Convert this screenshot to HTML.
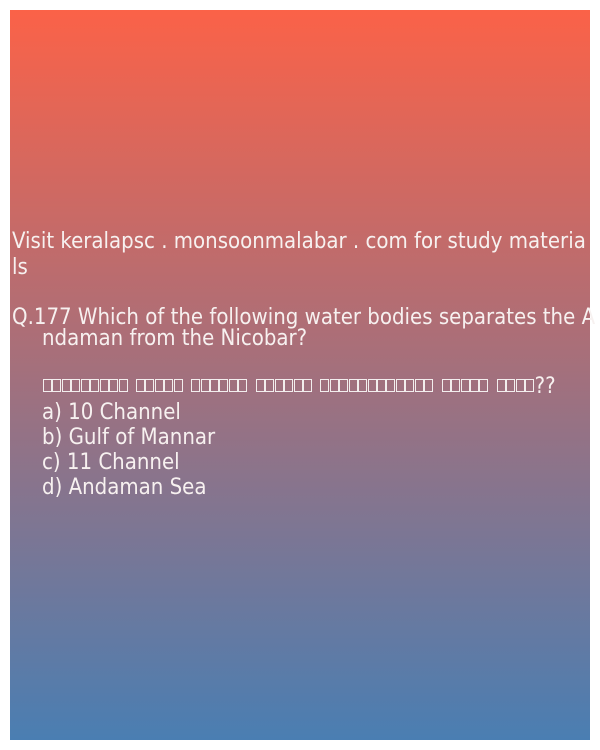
<!DOCTYPE html>
<html><head><meta charset="utf-8"><style>
html,body{margin:0;padding:0;background:#fff;width:600px;height:750px;overflow:hidden}
.box{position:absolute;left:10px;top:10px;width:580px;height:730px;background:linear-gradient(#fb6248,#4a7eb2);}
.t{position:absolute;color:#f7f1f0;font-family:"DejaVu Sans Condensed","Liberation Sans",sans-serif;font-size:22px;white-space:nowrap;line-height:25px}
.tf{display:inline-block;width:7px;height:11px;border:1px solid #f3eeee;margin-right:0.45px;vertical-align:1px}
.g{display:inline-block;margin-right:8px}
</style></head><body>
<div class="box"></div>
<div class="t" style="left:12px;top:229px">Visit keralapsc . monsoonmalabar . com for study materia</div>
<div class="t" style="left:12px;top:255px">ls</div>
<div class="t" style="left:12px;top:305px">Q.177 Which of the following water bodies separates the A</div>
<div class="t" style="left:42px;top:326px">ndaman from the Nicobar?</div>
<div class="t" style="left:43px;top:374px"><span class="g"><i class="tf"></i><i class="tf"></i><i class="tf"></i><i class="tf"></i><i class="tf"></i><i class="tf"></i><i class="tf"></i><i class="tf"></i><i class="tf"></i></span><span class="g"><i class="tf"></i><i class="tf"></i><i class="tf"></i><i class="tf"></i><i class="tf"></i></span><span class="g"><i class="tf"></i><i class="tf"></i><i class="tf"></i><i class="tf"></i><i class="tf"></i><i class="tf"></i></span><span class="g"><i class="tf"></i><i class="tf"></i><i class="tf"></i><i class="tf"></i><i class="tf"></i><i class="tf"></i></span><span class="g"><i class="tf"></i><i class="tf"></i><i class="tf"></i><i class="tf"></i><i class="tf"></i><i class="tf"></i><i class="tf"></i><i class="tf"></i><i class="tf"></i><i class="tf"></i><i class="tf"></i><i class="tf"></i></span><span class="g"><i class="tf"></i><i class="tf"></i><i class="tf"></i><i class="tf"></i><i class="tf"></i></span><span><i class="tf"></i><i class="tf"></i><i class="tf"></i><i class="tf"></i>??</span></div>
<div class="t" style="left:42px;top:400px">a) 10 Channel</div>
<div class="t" style="left:42px;top:425px">b) Gulf of Mannar</div>
<div class="t" style="left:42px;top:450px">c) 11 Channel</div>
<div class="t" style="left:42px;top:475px">d) Andaman Sea</div>
</body></html>
